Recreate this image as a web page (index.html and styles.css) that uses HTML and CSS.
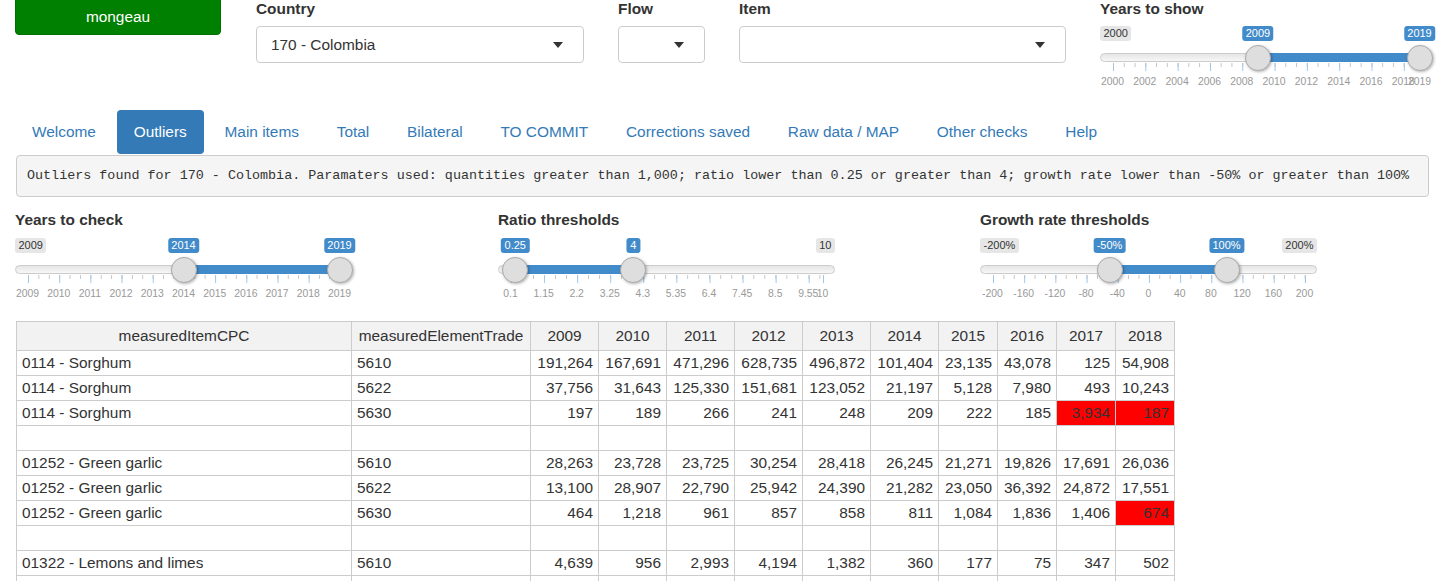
FILE: index.html
```html
<!DOCTYPE html>
<html>
<head>
<meta charset="utf-8">
<title>Outliers</title>
<link rel="stylesheet" href="styles.css">
</head>
<body>
<div class="page">
  <div class="toprow">
    <div class="col col-btn"><button class="btn-user">mongeau</button></div>
    <div class="col col-country">
      <div class="ctl-label">Country</div>
      <div class="select"><span>170 - Colombia</span><span class="caret"></span></div>
    </div>
    <div class="col col-flow">
      <div class="ctl-label">Flow</div>
      <div class="select"><span></span><span class="caret"></span></div>
    </div>
    <div class="col col-item">
      <div class="ctl-label">Item</div>
      <div class="select"><span></span><span class="caret"></span></div>
    </div>
    <div class="col col-years">
      <div class="ctl-label">Years to show</div>
      <div class="irs s-show">
        <span class="irs-line"></span>
        <span class="irs-min">2000</span>
        <div class="irs-scale">
          <span class="irs-bar" style="left:47.37%;width:52.63%"></span>
          <span class="irs-ticks"></span>
          <span class="irs-grid-text" style="left:0%">2000</span>
          <span class="irs-grid-text" style="left:10.53%">2002</span>
          <span class="irs-grid-text" style="left:21.05%">2004</span>
          <span class="irs-grid-text" style="left:31.58%">2006</span>
          <span class="irs-grid-text" style="left:42.11%">2008</span>
          <span class="irs-grid-text" style="left:52.63%">2010</span>
          <span class="irs-grid-text" style="left:63.16%">2012</span>
          <span class="irs-grid-text" style="left:73.68%">2014</span>
          <span class="irs-grid-text" style="left:84.21%">2016</span>
          <span class="irs-grid-text" style="left:94.74%">2018</span>
          <span class="irs-grid-text" style="left:100%">2019</span>
          <span class="irs-from" style="left:47.37%">2009</span>
          <span class="irs-to" style="left:100%">2019</span>
          <span class="irs-handle" style="left:47.37%"></span>
          <span class="irs-handle" style="left:100%"></span>
        </div>
      </div>
    </div>
  </div>

  <ul class="nav-pills">
    <li><a>Welcome</a></li>
    <li class="active"><a>Outliers</a></li>
    <li><a>Main items</a></li>
    <li><a>Total</a></li>
    <li><a>Bilateral</a></li>
    <li><a>TO COMMIT</a></li>
    <li><a>Corrections saved</a></li>
    <li><a>Raw data / MAP</a></li>
    <li><a>Other checks</a></li>
    <li><a>Help</a></li>
  </ul>

  <pre class="msg">Outliers found for 170 - Colombia. Paramaters used: quantities greater than 1,000; ratio lower than 0.25 or greater than 4; growth rate lower than -50% or greater than 100%</pre>

  <div class="sliderrow">
    <div class="scol">
      <div class="ctl-label">Years to check</div>
      <div class="irs s-check">
        <span class="irs-line"></span>
        <span class="irs-min">2009</span>
        <div class="irs-scale">
          <span class="irs-bar" style="left:50%;width:50%"></span>
          <span class="irs-ticks"></span>
          <span class="irs-grid-text" style="left:0%">2009</span>
          <span class="irs-grid-text" style="left:10%">2010</span>
          <span class="irs-grid-text" style="left:20%">2011</span>
          <span class="irs-grid-text" style="left:30%">2012</span>
          <span class="irs-grid-text" style="left:40%">2013</span>
          <span class="irs-grid-text" style="left:50%">2014</span>
          <span class="irs-grid-text" style="left:60%">2015</span>
          <span class="irs-grid-text" style="left:70%">2016</span>
          <span class="irs-grid-text" style="left:80%">2017</span>
          <span class="irs-grid-text" style="left:90%">2018</span>
          <span class="irs-grid-text" style="left:100%">2019</span>
          <span class="irs-from" style="left:50%">2014</span>
          <span class="irs-to" style="left:100%">2019</span>
          <span class="irs-handle" style="left:50%"></span>
          <span class="irs-handle" style="left:100%"></span>
        </div>
      </div>
    </div>
    <div class="scol">
      <div class="ctl-label">Ratio thresholds</div>
      <div class="irs s-ratio">
        <span class="irs-line"></span>
        <span class="irs-max">10</span>
        <div class="irs-scale">
          <span class="irs-bar" style="left:1.52%;width:38.88%"></span>
          <span class="irs-ticks"></span>
          <span class="irs-grid-text" style="left:0%">0.1</span>
          <span class="irs-grid-text" style="left:10.61%">1.15</span>
          <span class="irs-grid-text" style="left:21.21%">2.2</span>
          <span class="irs-grid-text" style="left:31.82%">3.25</span>
          <span class="irs-grid-text" style="left:42.42%">4.3</span>
          <span class="irs-grid-text" style="left:53.03%">5.35</span>
          <span class="irs-grid-text" style="left:63.64%">6.4</span>
          <span class="irs-grid-text" style="left:74.24%">7.45</span>
          <span class="irs-grid-text" style="left:84.85%">8.5</span>
          <span class="irs-grid-text" style="left:95.45%">9.55</span>
          <span class="irs-grid-text" style="left:100%">10</span>
          <span class="irs-from" style="left:1.52%">0.25</span>
          <span class="irs-to" style="left:39.39%">4</span>
          <span class="irs-handle" style="left:1.52%"></span>
          <span class="irs-handle" style="left:39.39%"></span>
        </div>
      </div>
    </div>
    <div class="scol">
      <div class="ctl-label">Growth rate thresholds</div>
      <div class="irs s-growth">
        <span class="irs-line"></span>
        <span class="irs-min">-200%</span>
        <span class="irs-max">200%</span>
        <div class="irs-scale">
          <span class="irs-bar" style="left:37.5%;width:37.5%"></span>
          <span class="irs-ticks"></span>
          <span class="irs-grid-text" style="left:0%">-200</span>
          <span class="irs-grid-text" style="left:10%">-160</span>
          <span class="irs-grid-text" style="left:20%">-120</span>
          <span class="irs-grid-text" style="left:30%">-80</span>
          <span class="irs-grid-text" style="left:40%">-40</span>
          <span class="irs-grid-text" style="left:50%">0</span>
          <span class="irs-grid-text" style="left:60%">40</span>
          <span class="irs-grid-text" style="left:70%">80</span>
          <span class="irs-grid-text" style="left:80%">120</span>
          <span class="irs-grid-text" style="left:90%">160</span>
          <span class="irs-grid-text" style="left:100%">200</span>
          <span class="irs-from" style="left:37.5%">-50%</span>
          <span class="irs-to" style="left:75%">100%</span>
          <span class="irs-handle" style="left:37.5%"></span>
          <span class="irs-handle" style="left:75%"></span>
        </div>
      </div>
    </div>
  </div>

  <table class="dt">
    <colgroup>
      <col class="c-item"><col class="c-el">
      <col class="c-y"><col class="c-y"><col class="c-y"><col class="c-y"><col class="c-y"><col class="c-y">
      <col class="c-y2"><col class="c-y2"><col class="c-y2"><col class="c-y2">
    </colgroup>
    <thead>
      <tr><th>measuredItemCPC</th><th>measuredElementTrade</th><th>2009</th><th>2010</th><th>2011</th><th>2012</th><th>2013</th><th>2014</th><th>2015</th><th>2016</th><th>2017</th><th>2018</th></tr>
    </thead>
    <tbody>
      <tr><td>0114 - Sorghum</td><td>5610</td><td class="n">191,264</td><td class="n">167,691</td><td class="n">471,296</td><td class="n">628,735</td><td class="n">496,872</td><td class="n">101,404</td><td class="n">23,135</td><td class="n">43,078</td><td class="n">125</td><td class="n">54,908</td></tr>
      <tr><td>0114 - Sorghum</td><td>5622</td><td class="n">37,756</td><td class="n">31,643</td><td class="n">125,330</td><td class="n">151,681</td><td class="n">123,052</td><td class="n">21,197</td><td class="n">5,128</td><td class="n">7,980</td><td class="n">493</td><td class="n">10,243</td></tr>
      <tr><td>0114 - Sorghum</td><td>5630</td><td class="n">197</td><td class="n">189</td><td class="n">266</td><td class="n">241</td><td class="n">248</td><td class="n">209</td><td class="n">222</td><td class="n">185</td><td class="n red">3,934</td><td class="n red">187</td></tr>
      <tr><td></td><td></td><td></td><td></td><td></td><td></td><td></td><td></td><td></td><td></td><td></td><td></td></tr>
      <tr><td>01252 - Green garlic</td><td>5610</td><td class="n">28,263</td><td class="n">23,728</td><td class="n">23,725</td><td class="n">30,254</td><td class="n">28,418</td><td class="n">26,245</td><td class="n">21,271</td><td class="n">19,826</td><td class="n">17,691</td><td class="n">26,036</td></tr>
      <tr><td>01252 - Green garlic</td><td>5622</td><td class="n">13,100</td><td class="n">28,907</td><td class="n">22,790</td><td class="n">25,942</td><td class="n">24,390</td><td class="n">21,282</td><td class="n">23,050</td><td class="n">36,392</td><td class="n">24,872</td><td class="n">17,551</td></tr>
      <tr><td>01252 - Green garlic</td><td>5630</td><td class="n">464</td><td class="n">1,218</td><td class="n">961</td><td class="n">857</td><td class="n">858</td><td class="n">811</td><td class="n">1,084</td><td class="n">1,836</td><td class="n">1,406</td><td class="n red">674</td></tr>
      <tr><td></td><td></td><td></td><td></td><td></td><td></td><td></td><td></td><td></td><td></td><td></td><td></td></tr>
      <tr><td>01322 - Lemons and limes</td><td>5610</td><td class="n">4,639</td><td class="n">956</td><td class="n">2,993</td><td class="n">4,194</td><td class="n">1,382</td><td class="n">360</td><td class="n">177</td><td class="n">75</td><td class="n">347</td><td class="n">502</td></tr>
      <tr><td></td><td></td><td></td><td></td><td></td><td></td><td></td><td></td><td></td><td></td><td></td><td></td></tr>
    </tbody>
  </table>
</div>
</body>
</html>
```

FILE: styles.css
```css
html, body {
  margin: 0;
  padding: 0;
  background: #fff;
}
body {
  font-family: "Liberation Sans", Arial, sans-serif;
  font-size: 15.4px;
  color: #333;
  overflow: hidden;
}
.page {
  margin-top: -5px;
}

/* top controls */
.toprow {
  display: flex;
  align-items: flex-start;
  gap: 34px;
  padding-left: 15px;
  height: 115px;
}
.col-btn { width: 206px; margin-right: 1px; }
.col-country { width: 328px; }
.col-flow { width: 87px; }
.col-item { width: 327px; }
.col-years { width: 332px; }

.btn-user {
  display: flex;
  align-items: center;
  justify-content: center;
  width: 206px;
  height: 40px;
  padding: 3px 0 0 0;
  background: #008000;
  color: #fff;
  border: 1px solid #007000;
  border-radius: 4px;
  font-family: "Liberation Sans", Arial, sans-serif;
  font-size: 15.4px;
}

.ctl-label {
  font-weight: bold;
  font-size: 15.4px;
  line-height: 20px;
  margin-top: 4px;
  margin-bottom: 7px;
  color: #333;
}
.select {
  box-sizing: border-box;
  height: 37px;
  border: 1px solid #ccc;
  border-radius: 4px;
  display: flex;
  align-items: center;
  justify-content: space-between;
  padding: 0 20px 0 14px;
  color: #333;
  background: #fff;
}
.caret {
  width: 0;
  height: 0;
  border-left: 5.5px solid transparent;
  border-right: 5.5px solid transparent;
  border-top: 6px solid #333;
}

/* ion range slider */
.irs {
  position: relative;
  height: 64px;
  font-family: "Liberation Sans", Arial, sans-serif;
}
.s-check, .s-ratio, .s-growth { width: 337px; }
.s-show { width: 332px; }

.irs-line {
  position: absolute;
  left: 0;
  right: 0;
  top: 27px;
  height: 9px;
  box-sizing: border-box;
  border: 1px solid #cccccc;
  border-radius: 8px;
  background: linear-gradient(to bottom, #dddddd -50%, #ffffff 150%);
}
.irs-min, .irs-max, .irs-from, .irs-to {
  position: absolute;
  top: 0;
  font-size: 11px;
  line-height: 13px;
  padding: 1px 3.5px;
  border-radius: 3px;
  white-space: nowrap;
}
.irs-min, .irs-max {
  background: #e6e6e6;
  color: #333;
}
.irs-min { left: 0; }
.irs-max { right: 0; }
.irs-from, .irs-to {
  background: #428bca;
  color: #fff;
  transform: translateX(-50%);
  z-index: 2;
}
.irs-scale {
  position: absolute;
  left: 12.5px;
  right: 12.5px;
  top: 0;
  bottom: 0;
}
.irs-bar {
  position: absolute;
  top: 27px;
  height: 9px;
  background: #428bca;
}
.irs-handle {
  position: absolute;
  top: 18.5px;
  width: 26px;
  height: 26px;
  box-sizing: border-box;
  margin-left: -13px;
  border-radius: 50%;
  background: #dedede;
  border: 1px solid #ababab;
  box-shadow: 1px 1px 3px rgba(0, 0, 0, 0.3);
  z-index: 3;
}
.irs-ticks {
  position: absolute;
  top: 37px;
  left: 0;
  width: calc(100% + 1px);
  height: 8px;
  background-image:
    linear-gradient(to right, #a3c6e6 1px, transparent 1px),
    linear-gradient(to right, #c4c4c4 1px, transparent 1px);
  background-repeat: repeat-x, repeat-x;
  background-position: 0 0, 0 0;
  background-size: var(--maj) 8px, var(--min) 4px;
}
.irs-ticks::after {
  content: "";
  position: absolute;
  right: 0;
  top: 0;
  width: 1px;
  height: 8px;
  background: #a3c6e6;
}
.s-check, .s-growth {
  --maj: calc((100% - 1px) / 10);
  --min: calc((100% - 1px) / 30);
}
.s-show {
  --maj: calc((100% - 1px) * 2 / 19);
  --min: calc((100% - 1px) * 2 / 57);
}
.s-ratio {
  --maj: calc((100% - 1px) * 1.05 / 9.9);
  --min: calc((100% - 1px) * 0.35 / 9.9);
}
.irs-grid-text {
  position: absolute;
  top: 49px;
  font-size: 10.4px;
  line-height: 13px;
  color: #999;
  transform: translateX(-50%);
  white-space: nowrap;
}

/* tabs */
.nav-pills {
  list-style: none;
  margin: 0 0 1px 0;
  padding: 0 0 0 15px;
  display: flex;
  height: 44px;
}
.nav-pills li {
  margin-right: 3.8px;
}
.nav-pills a {
  display: block;
  padding: 11px 17px;
  line-height: 22px;
  color: #337ab7;
  border-radius: 4px;
}
.nav-pills li.active a {
  background: #337ab7;
  color: #fff;
}

/* message */
.msg {
  margin: 0 16px 13px 16px;
  padding: 10px 10px;
  font-family: "Liberation Mono", "DejaVu Sans Mono", monospace;
  font-size: 13.4px;
  line-height: 20px;
  color: #333;
  background: #f5f5f5;
  border: 1px solid #ccc;
  border-radius: 4px;
  white-space: pre;
  overflow: hidden;
}

/* slider row */
.sliderrow {
  display: grid;
  grid-template-columns: 483px 482px 483px;
  padding-left: 15px;
  height: 111px;
}
.sliderrow .ctl-label {
  margin-top: 0;
  margin-bottom: 8px;
}

/* table */
.dt {
  border-collapse: collapse;
  table-layout: fixed;
  width: 1158px;
  margin-left: 16px;
  font-size: 15.4px;
  color: #333;
}
.c-item { width: 335px; }
.c-el { width: 179px; }
.c-y { width: 68px; }
.c-y2 { width: 59px; }
.dt th, .dt td {
  border: 1px solid #cccccc;
  padding: 0 5px;
  white-space: nowrap;
  overflow: hidden;
  box-sizing: border-box;
}
.dt th {
  height: 29px;
  background: #f2f2f2;
  font-weight: normal;
  text-align: center;
}
.dt td {
  height: 25px;
  text-align: left;
}
.dt td.n {
  text-align: right;
}
.dt td.red {
  background: #ff0000;
}
```
